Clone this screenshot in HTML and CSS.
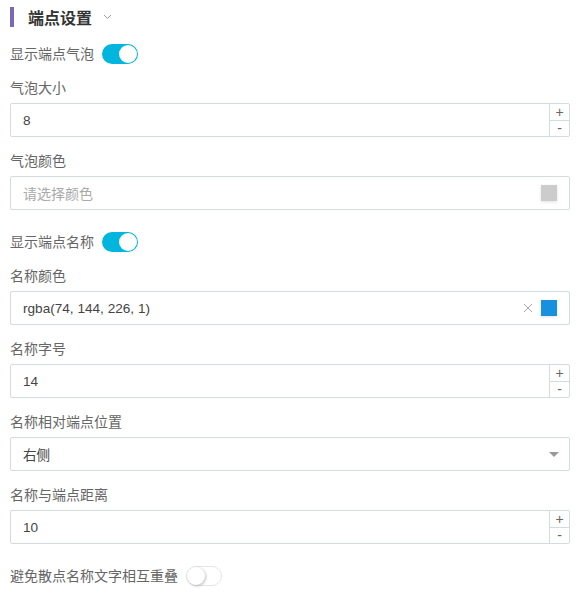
FILE: index.html
```html
<!DOCTYPE html>
<html lang="zh">
<head>
<meta charset="utf-8">
<link rel="stylesheet" href="styles.css">
</head>
<body>
<div class="panel">
  <div class="section-title">
    <span class="bar"></span>
    <span class="title-text">端点设置</span>
    <svg class="chev" width="9" height="6" viewBox="0 0 9 6"><path d="M1 1 L4.5 4.5 L8 1" fill="none" stroke="#9a9a9a" stroke-width="1"/></svg>
  </div>

  <div class="switch-row">
    <span class="label">显示端点气泡</span>
    <span class="switch on"><span class="knob"></span></span>
  </div>

  <div class="item">
    <div class="label">气泡大小</div>
    <div class="input number">
      <span class="value">8</span>
      <span class="stepper"><span class="step">+</span><span class="step">-</span></span>
    </div>
  </div>

  <div class="item">
    <div class="label">气泡颜色</div>
    <div class="input color">
      <span class="value placeholder">请选择颜色</span>
      <span class="swatch grey"></span>
    </div>
  </div>

  <div class="switch-row">
    <span class="label">显示端点名称</span>
    <span class="switch on"><span class="knob"></span></span>
  </div>

  <div class="item">
    <div class="label">名称颜色</div>
    <div class="input color">
      <span class="value">rgba(74, 144, 226, 1)</span>
      <svg class="clear" width="10" height="10" viewBox="0 0 10 10"><path d="M1 1 L9 9 M9 1 L1 9" stroke="#a6a6a6" stroke-width="1"/></svg>
      <span class="swatch blue"></span>
    </div>
  </div>

  <div class="item">
    <div class="label">名称字号</div>
    <div class="input number">
      <span class="value">14</span>
      <span class="stepper"><span class="step">+</span><span class="step">-</span></span>
    </div>
  </div>

  <div class="item">
    <div class="label">名称相对端点位置</div>
    <div class="input select">
      <span class="value">右侧</span>
      <svg class="caret" width="10" height="6" viewBox="0 0 10 6"><path d="M0 0 L10 0 L5 5 Z" fill="#999"/></svg>
    </div>
  </div>

  <div class="item">
    <div class="label">名称与端点距离</div>
    <div class="input number">
      <span class="value">10</span>
      <span class="stepper"><span class="step">+</span><span class="step">-</span></span>
    </div>
  </div>

  <div class="switch-row">
    <span class="label">避免散点名称文字相互重叠</span>
    <span class="switch off"><span class="knob"></span></span>
  </div>
</div>
</body>
</html>
```

FILE: styles.css
```css
* { box-sizing: border-box; }
html, body { margin: 0; padding: 0; background: #fff; }
body {
  font-family: "Liberation Sans", "Noto Sans CJK SC", sans-serif;
  font-size: 14px;
  color: #333;
}
.panel {
  padding: 7px 14px 0 10px;
}
.section-title {
  display: flex;
  align-items: center;
  height: 20px;
  margin-bottom: 9px;
}
.bar {
  width: 4px;
  height: 20px;
  background: #7a68b6;
  margin-right: 14px;
}
.title-text {
  font-size: 16px;
  font-weight: bold;
  color: #333;
}
.chev { margin-left: 11px; }

.label {
  color: #666;
  font-size: 14px;
  line-height: 20px;
}
.switch-row {
  display: flex;
  align-items: center;
  gap: 8px;
  padding-top: 8px;
  height: 28px;
  margin-bottom: 14px;
}
.switch {
  position: relative;
  width: 36px;
  height: 20px;
  border-radius: 10px;
  display: inline-block;
}
.switch.on { background: #00b5de; }
.switch.off { background: #fff; border: 1px solid #e6e6e6; }
.knob {
  position: absolute;
  top: 1px;
  width: 18px;
  height: 18px;
  border-radius: 50%;
  background: #fff;
}
.switch.on .knob { right: 1px; }
.switch.off .knob {
  left: 0;
  top: 0;
  box-shadow: 1px 1px 3px rgba(0,0,0,0.25);
}

.item { margin-bottom: 14px; }
.item .label { margin-bottom: 5px; }
.input {
  display: flex;
  align-items: center;
  height: 34px;
  border: 1px solid #d3dddd;
  border-radius: 2px;
  padding-left: 12px;
  background: #fff;
}
.value {
  flex: 1;
  color: #444;
  font-size: 13.6px;
}
.placeholder { color: #a9a9a9; font-size: 14px; }
.number { padding-right: 0; }
.stepper {
  display: flex;
  flex-direction: column;
  width: 20px;
  height: 100%;
  border-left: 1px solid #d3dddd;
}
.step {
  flex: 1;
  display: flex;
  align-items: center;
  justify-content: center;
  color: #666;
  font-size: 14px;
  line-height: 1;
}
.step + .step { border-top: 1px solid #d3dddd; }
.color { padding-right: 12px; }
.swatch {
  width: 16px;
  height: 16px;
  box-shadow: 0 1px 3px rgba(0,0,0,0.12);
}
.swatch.grey { background: #cccccc; }
.swatch.blue { background: #1890e0; }
.clear { margin-right: 8px; }
.select { padding-right: 10px; }
.caret { margin-top: 1px; }
```
